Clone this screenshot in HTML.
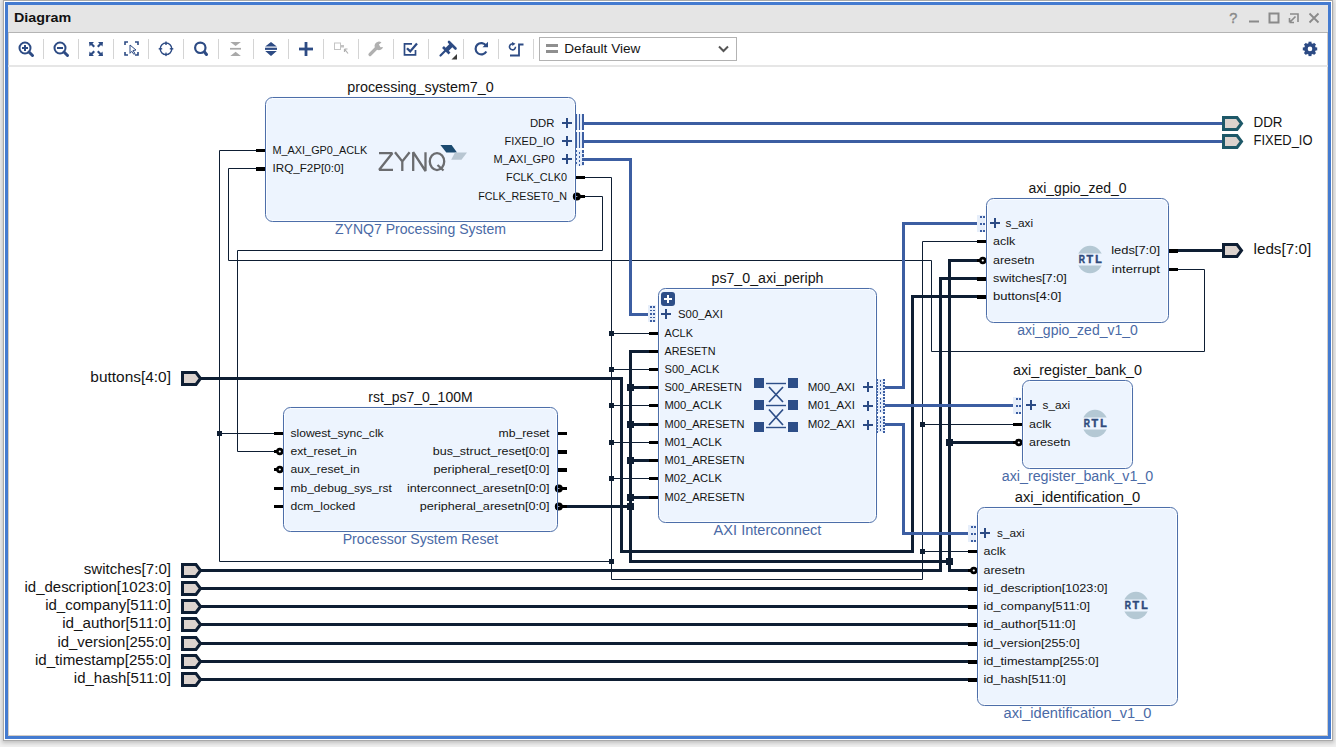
<!DOCTYPE html>
<html><head><meta charset="utf-8">
<style>
html,body{margin:0;padding:0;width:1336px;height:747px;overflow:hidden;background:#efefef;}
#white{position:absolute;left:4px;top:1px;width:1328px;height:739px;background:#fff;box-shadow:0 0 0 1px #a9a9a9, 0 1px 4px 2px rgba(0,0,0,0.2);}
#blue{position:absolute;left:5px;top:2px;width:1320px;height:731px;border:3px solid #447bd0;background:#fff;box-shadow:inset 1px -1px 0 #d2ccc6, inset -1px 0 0 #d2ccc6;}
#hdr{position:absolute;left:8px;top:5px;width:1320px;height:27px;background:#e5e5e5;border-bottom:1px solid #b4b4b4;}
#tbar{position:absolute;left:8px;top:65px;width:1320px;height:2px;background:#e6e6e6;}
svg{position:absolute;left:0;top:0;}
text{font-family:"Liberation Sans",sans-serif;}
</style></head><body>
<div id="white"></div>
<div id="blue"></div>
<div id="hdr"></div>
<div id="tbar"></div>
<svg width="1336" height="747" viewBox="0 0 1336 747">
<rect x="43" y="39" width="1" height="20" fill="#d4d4d4"/>
<rect x="78" y="39" width="1" height="20" fill="#d4d4d4"/>
<rect x="113" y="39" width="1" height="20" fill="#d4d4d4"/>
<rect x="148" y="39" width="1" height="20" fill="#d4d4d4"/>
<rect x="183" y="39" width="1" height="20" fill="#d4d4d4"/>
<rect x="218" y="39" width="1" height="20" fill="#d4d4d4"/>
<rect x="253" y="39" width="1" height="20" fill="#d4d4d4"/>
<rect x="288" y="39" width="1" height="20" fill="#d4d4d4"/>
<rect x="323" y="39" width="1" height="20" fill="#d4d4d4"/>
<rect x="358" y="39" width="1" height="20" fill="#d4d4d4"/>
<rect x="393" y="39" width="1" height="20" fill="#d4d4d4"/>
<rect x="428" y="39" width="1" height="20" fill="#d4d4d4"/>
<rect x="463" y="39" width="1" height="20" fill="#d4d4d4"/>
<rect x="498" y="39" width="1" height="20" fill="#d4d4d4"/>
<rect x="533" y="39" width="1" height="20" fill="#d4d4d4"/>
<circle cx="25" cy="48" r="5.5" fill="none" stroke="#2d4b84" stroke-width="2"/>
<path d="M29,52 L32.5,55.5" stroke="#2d4b84" stroke-width="3" stroke-linecap="round"/>
<rect x="22" y="47" width="6" height="2" fill="#2d4b84"/>
<rect x="24" y="45" width="2" height="6" fill="#2d4b84"/>
<circle cx="60" cy="48" r="5.5" fill="none" stroke="#2d4b84" stroke-width="2"/>
<path d="M64,52 L67.5,55.5" stroke="#2d4b84" stroke-width="3" stroke-linecap="round"/>
<rect x="57" y="47" width="6" height="2" fill="#2d4b84"/>
<path d="M89,42 h5 l-1.5,1.5 l2.5,2.5 l-1.5,1.5 l-2.5,-2.5 l-1.5,1.5 z M103,42 h-5 l1.5,1.5 l-2.5,2.5 l1.5,1.5 l2.5,-2.5 l1.5,1.5 z M89,56 h5 l-1.5,-1.5 l2.5,-2.5 l-1.5,-1.5 l-2.5,2.5 l-1.5,-1.5 z M103,56 h-5 l1.5,-1.5 l-2.5,-2.5 l1.5,-1.5 l2.5,2.5 l1.5,-1.5 z" fill="#2d4b84"/>
<path d="M125,45 v-3 h3 M135,42 h3 v3 M138,52 v3 h-3 M128,55 h-3 v-3" fill="none" stroke="#2d4b84" stroke-width="1.6"/>
<path d="M130,45 l6,5 l-3,0.5 l2,3 l-1.2,0.8 l-2,-3 l-1.8,2 z" fill="#fff" stroke="#2d4b84" stroke-width="1"/>
<circle cx="166" cy="48.8" r="5.8" fill="none" stroke="#2d4b84" stroke-width="1.4"/>
<rect x="165.3" y="41.5" width="1.4" height="3.5" fill="#2d4b84"/>
<rect x="165.3" y="52.6" width="1.4" height="3.5" fill="#2d4b84"/>
<rect x="158.7" y="48.1" width="3.5" height="1.4" fill="#2d4b84"/>
<rect x="169.8" y="48.1" width="3.5" height="1.4" fill="#2d4b84"/>
<circle cx="200.3" cy="47.8" r="5.2" fill="none" stroke="#2d4b84" stroke-width="2.2"/>
<path d="M204.5,52 L206.5,54.5" stroke="#2d4b84" stroke-width="3" stroke-linecap="round"/>
<path d="M230.3,42 h10.6 l-5.3,4.1 z M230.3,56 h10.6 l-5.3,-4.3 z" fill="#a9a9a9"/>
<rect x="230" y="47.9" width="11" height="1.7" fill="#a9a9a9"/>
<path d="M265.2,46.6 l5.8,-4.7 l5.8,4.7 z M265.2,51 l5.8,5 l5.8,-5 z" fill="#2d4b84"/>
<rect x="265" y="47.7" width="12" height="2.2" fill="#2d4b84"/>
<rect x="299" y="47.6" width="14" height="2.8" fill="#2d4b84"/>
<rect x="304.6" y="42" width="2.8" height="14" fill="#2d4b84"/>
<rect x="334.5" y="43" width="6" height="6.5" fill="none" stroke="#c4c4c4" stroke-width="1"/>
<rect x="341" y="45" width="3" height="2.5" fill="#c4c4c4"/>
<path d="M344.5,49 l3.5,4.5 M344.5,49 v3 M344.5,49 h3" stroke="#b0b0b0" stroke-width="1.2" fill="none"/>
<path d="M370,54.5 l7,-7" stroke="#b0b0b0" stroke-width="3.2" stroke-linecap="round"/>
<path d="M381.5,42.5 a4.3,4.3 0 1 0 1.5,4.5 l-2.5,0.2 l-1.6,-2.8 z" fill="#b0b0b0"/>
<path d="M415.5,50 v4.8 h-11 v-11 h7.5" fill="none" stroke="#2d4b84" stroke-width="1.7"/>
<path d="M407,48.2 l3.2,3.2 l6.8,-7.8" fill="none" stroke="#2d4b84" stroke-width="2.3"/>
<path d="M440.5,55.5 L446,50" stroke="#2d4b84" stroke-width="2.2" stroke-linecap="round"/>
<path d="M443,47 L449.5,53.5" stroke="#2d4b84" stroke-width="2.6"/>
<path d="M446,50.5 L451.5,45" stroke="#2d4b84" stroke-width="4.5"/>
<path d="M449,42 L455.5,48.5" stroke="#2d4b84" stroke-width="2.6" stroke-linecap="round"/>
<path d="M451.5,59.5 h5.5 v-5.5 z" fill="#3a3a3a"/>
<path d="M486,45.5 A5.7,5.7 0 1 0 486.3,51.5" fill="none" stroke="#2d4b84" stroke-width="2.2"/>
<path d="M482.5,47.3 h5.5 v-5.5 z" fill="#2d4b84"/>
<path d="M510,55.5 h9 v-11 h4.5" fill="none" stroke="#2d4b84" stroke-width="1.8"/>
<path d="M515.5,46.8 A3,3 0 1 1 513.5,44" fill="none" stroke="#2d4b84" stroke-width="1.6"/>
<path d="M512,42 l3.5,1.8 l-3.2,2.2 z" fill="#2d4b84"/>
<rect x="539.5" y="37.5" width="197" height="23" fill="#fff" stroke="#b3b3b3" stroke-width="1"/>
<rect x="546" y="44" width="12" height="3" fill="#8f8f8f"/>
<rect x="546" y="50" width="12" height="3" fill="#8f8f8f"/>
<text x="564.30" y="53.00" font-size="12.72" textLength="76.12" lengthAdjust="spacingAndGlyphs" fill="#141414">Default View</text>
<path d="M719,46.5 l4.5,4.5 l4.5,-4.5" fill="none" stroke="#555" stroke-width="2"/>
<g transform="translate(1310,48.9)"><circle r="4.1" fill="none" stroke="#2d4b84" stroke-width="3.6"/><rect x="-1.5" y="-7.2" width="3" height="3.5" fill="#2d4b84" transform="rotate(0)"/><rect x="-1.5" y="-7.2" width="3" height="3.5" fill="#2d4b84" transform="rotate(45)"/><rect x="-1.5" y="-7.2" width="3" height="3.5" fill="#2d4b84" transform="rotate(90)"/><rect x="-1.5" y="-7.2" width="3" height="3.5" fill="#2d4b84" transform="rotate(135)"/><rect x="-1.5" y="-7.2" width="3" height="3.5" fill="#2d4b84" transform="rotate(180)"/><rect x="-1.5" y="-7.2" width="3" height="3.5" fill="#2d4b84" transform="rotate(225)"/><rect x="-1.5" y="-7.2" width="3" height="3.5" fill="#2d4b84" transform="rotate(270)"/><rect x="-1.5" y="-7.2" width="3" height="3.5" fill="#2d4b84" transform="rotate(315)"/></g>
<text x="14.00" y="22.00" font-size="12.72" textLength="57.28" lengthAdjust="spacingAndGlyphs" fill="#111" font-weight="bold">Diagram</text>
<text x="1229.3" y="23" font-size="14.5" fill="#8a8a8a" stroke="#8a8a8a" stroke-width="0.4">?</text>
<rect x="1249" y="20.5" width="10" height="2" fill="#8a8a8a"/>
<rect x="1269.5" y="13.5" width="9" height="9" fill="none" stroke="#8a8a8a" stroke-width="2"/>
<path d="M1290,14 h8 v8 M1289.5,22.5 l6,-6 M1289.5,22.5 v-4.5 M1289.5,22.5 h4.5" fill="none" stroke="#8a8a8a" stroke-width="1.6"/>
<path d="M1309.5,13.5 l9,9 M1318.5,13.5 l-9,9" stroke="#8a8a8a" stroke-width="1.8"/>
<polyline points="584.5,177.5 611.5,177.5 611.5,579.5 922.5,579.5 922.5,241.5 976.5,241.5" fill="none" stroke="#0e1e33" stroke-width="1" stroke-linejoin="miter" stroke-linecap="square"/>
<polyline points="256.5,150.5 219.5,150.5 219.5,561.5 611.5,561.5" fill="none" stroke="#0e1e33" stroke-width="1" stroke-linejoin="miter" stroke-linecap="square"/>
<polyline points="219.5,433.5 274.5,433.5" fill="none" stroke="#0e1e33" stroke-width="1" stroke-linejoin="miter" stroke-linecap="square"/>
<polyline points="611.5,333.5 649.5,333.5" fill="none" stroke="#0e1e33" stroke-width="1" stroke-linejoin="miter" stroke-linecap="square"/>
<polyline points="611.5,369.5 649.5,369.5" fill="none" stroke="#0e1e33" stroke-width="1" stroke-linejoin="miter" stroke-linecap="square"/>
<polyline points="611.5,405.5 649.5,405.5" fill="none" stroke="#0e1e33" stroke-width="1" stroke-linejoin="miter" stroke-linecap="square"/>
<polyline points="611.5,442.5 649.5,442.5" fill="none" stroke="#0e1e33" stroke-width="1" stroke-linejoin="miter" stroke-linecap="square"/>
<polyline points="611.5,478.5 649.5,478.5" fill="none" stroke="#0e1e33" stroke-width="1" stroke-linejoin="miter" stroke-linecap="square"/>
<polyline points="922.5,424.5 1013.5,424.5" fill="none" stroke="#0e1e33" stroke-width="1" stroke-linejoin="miter" stroke-linecap="square"/>
<polyline points="922.5,551.5 968.5,551.5" fill="none" stroke="#0e1e33" stroke-width="1" stroke-linejoin="miter" stroke-linecap="square"/>
<polyline points="584.5,196.5 602.5,196.5 602.5,250.5 237.5,250.5 237.5,451.5 274.5,451.5" fill="none" stroke="#0e1e33" stroke-width="1" stroke-linejoin="miter" stroke-linecap="square"/>
<polyline points="256.5,168.5 228.5,168.5 228.5,260.5 931.5,260.5 931.5,351.5 1204.5,351.5 1204.5,269.5 1177.5,269.5" fill="none" stroke="#0e1e33" stroke-width="1" stroke-linejoin="miter" stroke-linecap="square"/>
<polyline points="566.5,506.5 630.5,506.5" fill="none" stroke="#0e1e33" stroke-width="3" stroke-linejoin="miter" stroke-linecap="square"/>
<polyline points="649.5,351.5 630.5,351.5 630.5,561.5 949.5,561.5" fill="none" stroke="#0e1e33" stroke-width="3" stroke-linejoin="miter" stroke-linecap="square"/>
<polyline points="630.5,387.5 649.5,387.5" fill="none" stroke="#0e1e33" stroke-width="3" stroke-linejoin="miter" stroke-linecap="square"/>
<polyline points="630.5,424.5 649.5,424.5" fill="none" stroke="#0e1e33" stroke-width="3" stroke-linejoin="miter" stroke-linecap="square"/>
<polyline points="630.5,460.5 649.5,460.5" fill="none" stroke="#0e1e33" stroke-width="3" stroke-linejoin="miter" stroke-linecap="square"/>
<polyline points="630.5,497.5 649.5,497.5" fill="none" stroke="#0e1e33" stroke-width="3" stroke-linejoin="miter" stroke-linecap="square"/>
<polyline points="977.5,260.5 949.5,260.5 949.5,570.5 968.5,570.5" fill="none" stroke="#0e1e33" stroke-width="3" stroke-linejoin="miter" stroke-linecap="square"/>
<polyline points="949.5,442.5 1013.5,442.5" fill="none" stroke="#0e1e33" stroke-width="3" stroke-linejoin="miter" stroke-linecap="square"/>
<polyline points="202.5,378.5 621.5,378.5 621.5,551.5 912.5,551.5 912.5,296.5 977.5,296.5" fill="none" stroke="#0e1e33" stroke-width="3" stroke-linejoin="miter" stroke-linecap="square"/>
<polyline points="202.5,570.5 940.5,570.5 940.5,278.5 977.5,278.5" fill="none" stroke="#0e1e33" stroke-width="3" stroke-linejoin="miter" stroke-linecap="square"/>
<polyline points="202.5,588.5 968.5,588.5" fill="none" stroke="#0e1e33" stroke-width="3" stroke-linejoin="miter" stroke-linecap="square"/>
<polyline points="202.5,606.5 968.5,606.5" fill="none" stroke="#0e1e33" stroke-width="3" stroke-linejoin="miter" stroke-linecap="square"/>
<polyline points="202.5,624.5 968.5,624.5" fill="none" stroke="#0e1e33" stroke-width="3" stroke-linejoin="miter" stroke-linecap="square"/>
<polyline points="202.5,643.5 968.5,643.5" fill="none" stroke="#0e1e33" stroke-width="3" stroke-linejoin="miter" stroke-linecap="square"/>
<polyline points="202.5,661.5 968.5,661.5" fill="none" stroke="#0e1e33" stroke-width="3" stroke-linejoin="miter" stroke-linecap="square"/>
<polyline points="202.5,679.5 968.5,679.5" fill="none" stroke="#0e1e33" stroke-width="3" stroke-linejoin="miter" stroke-linecap="square"/>
<polyline points="1177.5,250.5 1222.5,250.5" fill="none" stroke="#0e1e33" stroke-width="3" stroke-linejoin="miter" stroke-linecap="square"/>
<polyline points="585.5,123.5 1222.5,123.5" fill="none" stroke="#3c5ea2" stroke-width="3" stroke-linejoin="miter" stroke-linecap="square"/>
<polyline points="585.5,141.5 1222.5,141.5" fill="none" stroke="#3c5ea2" stroke-width="3" stroke-linejoin="miter" stroke-linecap="square"/>
<polyline points="585.5,159.5 630.5,159.5 630.5,314.5 648.5,314.5" fill="none" stroke="#3c5ea2" stroke-width="3" stroke-linejoin="miter" stroke-linecap="square"/>
<polyline points="886.5,387.5 903.5,387.5 903.5,223.5 976.5,223.5" fill="none" stroke="#3c5ea2" stroke-width="3" stroke-linejoin="miter" stroke-linecap="square"/>
<polyline points="886.5,405.5 1013.5,405.5" fill="none" stroke="#3c5ea2" stroke-width="3" stroke-linejoin="miter" stroke-linecap="square"/>
<polyline points="886.5,424.5 903.5,424.5 903.5,533.5 967.5,533.5" fill="none" stroke="#3c5ea2" stroke-width="3" stroke-linejoin="miter" stroke-linecap="square"/>
<rect x="217" y="431" width="5" height="5" fill="#0e1e33"/>
<rect x="609" y="331" width="5" height="5" fill="#0e1e33"/>
<rect x="609" y="367" width="5" height="5" fill="#0e1e33"/>
<rect x="609" y="403" width="5" height="5" fill="#0e1e33"/>
<rect x="609" y="440" width="5" height="5" fill="#0e1e33"/>
<rect x="609" y="476" width="5" height="5" fill="#0e1e33"/>
<rect x="609" y="559" width="5" height="5" fill="#0e1e33"/>
<rect x="920" y="422" width="5" height="5" fill="#0e1e33"/>
<rect x="920" y="549" width="5" height="5" fill="#0e1e33"/>
<rect x="627" y="384" width="7" height="7" fill="#0e1e33"/>
<rect x="627" y="421" width="7" height="7" fill="#0e1e33"/>
<rect x="627" y="457" width="7" height="7" fill="#0e1e33"/>
<rect x="627" y="494" width="7" height="7" fill="#0e1e33"/>
<rect x="627" y="503" width="7" height="7" fill="#0e1e33"/>
<rect x="946" y="558" width="7" height="7" fill="#0e1e33"/>
<rect x="946" y="439" width="7" height="7" fill="#0e1e33"/>
<rect x="265.5" y="97.5" width="310" height="124" rx="7" ry="7" fill="#edf4fe" stroke="#fbfdff" stroke-width="3"/>
<text x="347.23" y="91.80" font-size="13.78" textLength="146.53" lengthAdjust="spacingAndGlyphs" fill="#141414">processing_system7_0</text>
<text x="334.92" y="234.00" font-size="13.78" textLength="171.16" lengthAdjust="spacingAndGlyphs" fill="#4a6aa6">ZYNQ7 Processing System</text>
<rect x="256" y="149" width="9" height="3" fill="#000"/>
<text x="272.50" y="154.00" font-size="11.66" textLength="94.84" lengthAdjust="spacingAndGlyphs" fill="#141414">M_AXI_GP0_ACLK</text>
<rect x="256" y="167" width="9" height="4" fill="#000"/>
<text x="272.50" y="172.00" font-size="11.66" textLength="71.31" lengthAdjust="spacingAndGlyphs" fill="#141414">IRQ_F2P[0:0]</text>
<rect x="576" y="114" width="8" height="16" fill="#e6eefa"/>
<rect x="576" y="114" width="1" height="16" fill="#3c5ea2"/>
<rect x="579" y="114" width="1" height="16" fill="#3c5ea2"/>
<rect x="582" y="114" width="2" height="16" fill="#3c5ea2"/>
<rect x="562" y="122" width="10" height="2" fill="#2c4b85"/>
<rect x="566" y="118" width="2" height="10" fill="#2c4b85"/>
<text x="529.92" y="127.00" font-size="11.66" textLength="24.58" lengthAdjust="spacingAndGlyphs" fill="#141414">DDR</text>
<rect x="576" y="132" width="8" height="16" fill="#e6eefa"/>
<rect x="576" y="132" width="1" height="16" fill="#3c5ea2"/>
<rect x="579" y="132" width="1" height="16" fill="#3c5ea2"/>
<rect x="582" y="132" width="2" height="16" fill="#3c5ea2"/>
<rect x="562" y="140" width="10" height="2" fill="#2c4b85"/>
<rect x="566" y="136" width="2" height="10" fill="#2c4b85"/>
<text x="504.56" y="145.00" font-size="11.66" textLength="49.94" lengthAdjust="spacingAndGlyphs" fill="#141414">FIXED_IO</text>
<rect x="576" y="150" width="8" height="16" fill="#e6eefa"/>
<rect x="576" y="150" width="1" height="2" fill="#3c5ea2"/>
<rect x="582" y="150" width="2" height="2" fill="#3c5ea2"/>
<rect x="576" y="154" width="1" height="2" fill="#3c5ea2"/>
<rect x="582" y="154" width="2" height="2" fill="#3c5ea2"/>
<rect x="576" y="158" width="1" height="2" fill="#3c5ea2"/>
<rect x="582" y="158" width="2" height="2" fill="#3c5ea2"/>
<rect x="576" y="162" width="1" height="2" fill="#3c5ea2"/>
<rect x="582" y="162" width="2" height="2" fill="#3c5ea2"/>
<rect x="579" y="152" width="1" height="2" fill="#3c5ea2"/>
<rect x="582" y="152" width="2" height="1" fill="#3c5ea2"/>
<rect x="579" y="156" width="1" height="2" fill="#3c5ea2"/>
<rect x="582" y="156" width="2" height="1" fill="#3c5ea2"/>
<rect x="579" y="160" width="1" height="2" fill="#3c5ea2"/>
<rect x="582" y="160" width="2" height="1" fill="#3c5ea2"/>
<rect x="579" y="164" width="1" height="2" fill="#3c5ea2"/>
<rect x="582" y="164" width="2" height="1" fill="#3c5ea2"/>
<rect x="562" y="158" width="10" height="2" fill="#2c4b85"/>
<rect x="566" y="154" width="2" height="10" fill="#2c4b85"/>
<text x="493.53" y="163.00" font-size="11.66" textLength="60.97" lengthAdjust="spacingAndGlyphs" fill="#141414">M_AXI_GP0</text>
<rect x="576" y="176" width="9" height="3" fill="#000"/>
<text x="506.11" y="181.00" font-size="11.66" textLength="60.89" lengthAdjust="spacingAndGlyphs" fill="#141414">FCLK_CLK0</text>
<rect x="579" y="195" width="6" height="3" fill="#000"/>
<circle cx="576.8" cy="196.5" r="2.3" fill="#fff" stroke="#000" stroke-width="3.4"/>
<text x="478.16" y="200.00" font-size="11.66" textLength="88.84" lengthAdjust="spacingAndGlyphs" fill="#141414">FCLK_RESET0_N</text>
<path d="M379,153.2 H392.3 L379.2,169.8 H393" fill="none" stroke="#6b6c6f" stroke-width="2.3" stroke-linejoin="bevel"/>
<path d="M395,152.2 L402.3,161.5 L409.6,152.2 M402.3,161.5 V171" fill="none" stroke="#6b6c6f" stroke-width="2.3"/>
<path d="M413.2,171 V152.2 L425.5,171 V152.2" fill="none" stroke="#6b6c6f" stroke-width="2.3" stroke-linejoin="bevel"/>
<ellipse cx="437" cy="161.6" rx="7.2" ry="8.5" fill="none" stroke="#6b6c6f" stroke-width="2.3"/>
<path d="M437.5,165 L443.5,170.5" fill="none" stroke="#6b6c6f" stroke-width="2.3"/>
<polygon points="440.4,145 451.6,145 457,152.5 446.3,152.5" fill="#1b4a70"/>
<polygon points="455,152.5 467,152.5 461.5,159.7 451.2,159.7" fill="#b8c6d2"/>
<rect x="283.5" y="407.5" width="274" height="124" rx="7" ry="7" fill="#edf4fe" stroke="#fbfdff" stroke-width="3"/>
<text x="368.37" y="401.80" font-size="13.78" textLength="104.27" lengthAdjust="spacingAndGlyphs" fill="#141414">rst_ps7_0_100M</text>
<text x="342.70" y="544.00" font-size="13.78" textLength="155.61" lengthAdjust="spacingAndGlyphs" fill="#4a6aa6">Processor System Reset</text>
<rect x="274" y="432" width="9" height="3" fill="#000"/>
<text x="290.50" y="437.00" font-size="11.66" textLength="93.09" lengthAdjust="spacingAndGlyphs" fill="#141414">slowest_sync_clk</text>
<rect x="274" y="450" width="5" height="3" fill="#000"/>
<circle cx="279.8" cy="451.5" r="2.4" fill="#fff" stroke="#000" stroke-width="2.6"/>
<text x="290.50" y="455.00" font-size="11.66" textLength="66.30" lengthAdjust="spacingAndGlyphs" fill="#141414">ext_reset_in</text>
<rect x="274" y="468" width="5" height="3" fill="#000"/>
<circle cx="279.8" cy="469.5" r="2.4" fill="#fff" stroke="#000" stroke-width="2.6"/>
<text x="290.50" y="473.00" font-size="11.66" textLength="69.11" lengthAdjust="spacingAndGlyphs" fill="#141414">aux_reset_in</text>
<rect x="274" y="487" width="9" height="3" fill="#000"/>
<text x="290.50" y="492.00" font-size="11.66" textLength="101.44" lengthAdjust="spacingAndGlyphs" fill="#141414">mb_debug_sys_rst</text>
<rect x="274" y="505" width="9" height="3" fill="#000"/>
<text x="290.50" y="510.00" font-size="11.66" textLength="64.83" lengthAdjust="spacingAndGlyphs" fill="#141414">dcm_locked</text>
<rect x="558" y="432" width="9" height="3" fill="#000"/>
<text x="498.44" y="437.00" font-size="11.66" textLength="51.06" lengthAdjust="spacingAndGlyphs" fill="#141414">mb_reset</text>
<rect x="558" y="450" width="9" height="4" fill="#000"/>
<text x="432.77" y="455.00" font-size="11.66" textLength="116.73" lengthAdjust="spacingAndGlyphs" fill="#141414">bus_struct_reset[0:0]</text>
<rect x="558" y="468" width="9" height="4" fill="#000"/>
<text x="433.48" y="473.00" font-size="11.66" textLength="116.02" lengthAdjust="spacingAndGlyphs" fill="#141414">peripheral_reset[0:0]</text>
<rect x="561" y="487" width="6" height="3" fill="#000"/>
<circle cx="558.8" cy="488.5" r="2.3" fill="#fff" stroke="#000" stroke-width="3.4"/>
<text x="406.91" y="492.00" font-size="11.66" textLength="142.59" lengthAdjust="spacingAndGlyphs" fill="#141414">interconnect_aresetn[0:0]</text>
<rect x="561" y="505" width="6" height="3" fill="#000"/>
<circle cx="558.8" cy="506.5" r="2.3" fill="#fff" stroke="#000" stroke-width="3.4"/>
<text x="419.78" y="510.00" font-size="11.66" textLength="129.72" lengthAdjust="spacingAndGlyphs" fill="#141414">peripheral_aresetn[0:0]</text>
<rect x="658.5" y="288.5" width="218" height="234" rx="7" ry="7" fill="#edf4fe" stroke="#fbfdff" stroke-width="3"/>
<text x="711.50" y="282.80" font-size="13.78" textLength="112.00" lengthAdjust="spacingAndGlyphs" fill="#141414">ps7_0_axi_periph</text>
<text x="713.62" y="535.00" font-size="13.78" textLength="107.77" lengthAdjust="spacingAndGlyphs" fill="#4a6aa6">AXI Interconnect</text>
<rect x="661" y="292" width="14" height="14" rx="3" fill="#2d4e88"/>
<rect x="664" y="298" width="8" height="2" fill="#fff"/>
<rect x="667" y="295" width="2" height="8" fill="#fff"/>
<rect x="648" y="305" width="8" height="17" fill="#e6eefa"/>
<rect x="650" y="306" width="2" height="2" fill="#3c5ea2"/>
<rect x="653" y="306" width="2" height="2" fill="#3c5ea2"/>
<rect x="650" y="310" width="2" height="1" fill="#3c5ea2"/>
<rect x="653" y="310" width="2" height="1" fill="#3c5ea2"/>
<rect x="650" y="313" width="2" height="2" fill="#3c5ea2"/>
<rect x="653" y="313" width="2" height="2" fill="#3c5ea2"/>
<rect x="650" y="317" width="2" height="1" fill="#3c5ea2"/>
<rect x="653" y="317" width="2" height="1" fill="#3c5ea2"/>
<rect x="650" y="320" width="2" height="2" fill="#3c5ea2"/>
<rect x="653" y="320" width="2" height="2" fill="#3c5ea2"/>
<rect x="661" y="313" width="10" height="2" fill="#2c4b85"/>
<rect x="665" y="309" width="2" height="10" fill="#2c4b85"/>
<text x="678.00" y="318.00" font-size="11.66" textLength="44.80" lengthAdjust="spacingAndGlyphs" fill="#141414">S00_AXI</text>
<rect x="649" y="332" width="9" height="3" fill="#000"/>
<text x="664.50" y="337.00" font-size="11.66" textLength="28.38" lengthAdjust="spacingAndGlyphs" fill="#141414">ACLK</text>
<rect x="649" y="350" width="9" height="3" fill="#000"/>
<text x="664.50" y="355.00" font-size="11.66" textLength="51.02" lengthAdjust="spacingAndGlyphs" fill="#141414">ARESETN</text>
<rect x="649" y="368" width="9" height="3" fill="#000"/>
<text x="664.50" y="373.00" font-size="11.66" textLength="54.86" lengthAdjust="spacingAndGlyphs" fill="#141414">S00_ACLK</text>
<rect x="649" y="386" width="9" height="3" fill="#000"/>
<text x="664.50" y="391.00" font-size="11.66" textLength="77.50" lengthAdjust="spacingAndGlyphs" fill="#141414">S00_ARESETN</text>
<rect x="649" y="404" width="9" height="3" fill="#000"/>
<text x="664.50" y="409.00" font-size="11.66" textLength="57.36" lengthAdjust="spacingAndGlyphs" fill="#141414">M00_ACLK</text>
<rect x="649" y="423" width="9" height="3" fill="#000"/>
<text x="664.50" y="428.00" font-size="11.66" textLength="80.00" lengthAdjust="spacingAndGlyphs" fill="#141414">M00_ARESETN</text>
<rect x="649" y="441" width="9" height="3" fill="#000"/>
<text x="664.50" y="446.00" font-size="11.66" textLength="57.36" lengthAdjust="spacingAndGlyphs" fill="#141414">M01_ACLK</text>
<rect x="649" y="459" width="9" height="3" fill="#000"/>
<text x="664.50" y="464.00" font-size="11.66" textLength="80.00" lengthAdjust="spacingAndGlyphs" fill="#141414">M01_ARESETN</text>
<rect x="649" y="477" width="9" height="3" fill="#000"/>
<text x="664.50" y="482.00" font-size="11.66" textLength="57.36" lengthAdjust="spacingAndGlyphs" fill="#141414">M02_ACLK</text>
<rect x="649" y="496" width="9" height="3" fill="#000"/>
<text x="664.50" y="501.00" font-size="11.66" textLength="80.00" lengthAdjust="spacingAndGlyphs" fill="#141414">M02_ARESETN</text>
<rect x="877" y="379" width="8" height="16" fill="#e6eefa"/>
<rect x="877" y="379" width="1" height="2" fill="#3c5ea2"/>
<rect x="883" y="379" width="2" height="2" fill="#3c5ea2"/>
<rect x="877" y="382" width="1" height="2" fill="#3c5ea2"/>
<rect x="883" y="382" width="2" height="2" fill="#3c5ea2"/>
<rect x="877" y="385" width="1" height="2" fill="#3c5ea2"/>
<rect x="883" y="385" width="2" height="2" fill="#3c5ea2"/>
<rect x="877" y="388" width="1" height="2" fill="#3c5ea2"/>
<rect x="883" y="388" width="2" height="2" fill="#3c5ea2"/>
<rect x="877" y="391" width="1" height="2" fill="#3c5ea2"/>
<rect x="883" y="391" width="2" height="2" fill="#3c5ea2"/>
<rect x="877" y="394" width="1" height="2" fill="#3c5ea2"/>
<rect x="883" y="394" width="2" height="2" fill="#3c5ea2"/>
<rect x="880" y="380" width="1" height="2" fill="#3c5ea2"/>
<rect x="880" y="384" width="1" height="2" fill="#3c5ea2"/>
<rect x="880" y="388" width="1" height="2" fill="#3c5ea2"/>
<rect x="880" y="392" width="1" height="2" fill="#3c5ea2"/>
<rect x="863" y="386" width="10" height="2" fill="#2c4b85"/>
<rect x="867" y="382" width="2" height="10" fill="#2c4b85"/>
<text x="807.70" y="391.00" font-size="11.66" textLength="47.30" lengthAdjust="spacingAndGlyphs" fill="#141414">M00_AXI</text>
<rect x="877" y="397" width="8" height="16" fill="#e6eefa"/>
<rect x="877" y="397" width="1" height="2" fill="#3c5ea2"/>
<rect x="883" y="397" width="2" height="2" fill="#3c5ea2"/>
<rect x="877" y="400" width="1" height="2" fill="#3c5ea2"/>
<rect x="883" y="400" width="2" height="2" fill="#3c5ea2"/>
<rect x="877" y="403" width="1" height="2" fill="#3c5ea2"/>
<rect x="883" y="403" width="2" height="2" fill="#3c5ea2"/>
<rect x="877" y="406" width="1" height="2" fill="#3c5ea2"/>
<rect x="883" y="406" width="2" height="2" fill="#3c5ea2"/>
<rect x="877" y="409" width="1" height="2" fill="#3c5ea2"/>
<rect x="883" y="409" width="2" height="2" fill="#3c5ea2"/>
<rect x="877" y="412" width="1" height="2" fill="#3c5ea2"/>
<rect x="883" y="412" width="2" height="2" fill="#3c5ea2"/>
<rect x="880" y="398" width="1" height="2" fill="#3c5ea2"/>
<rect x="880" y="402" width="1" height="2" fill="#3c5ea2"/>
<rect x="880" y="406" width="1" height="2" fill="#3c5ea2"/>
<rect x="880" y="410" width="1" height="2" fill="#3c5ea2"/>
<rect x="863" y="405" width="10" height="2" fill="#2c4b85"/>
<rect x="867" y="401" width="2" height="10" fill="#2c4b85"/>
<text x="807.70" y="409.00" font-size="11.66" textLength="47.30" lengthAdjust="spacingAndGlyphs" fill="#141414">M01_AXI</text>
<rect x="877" y="416" width="8" height="16" fill="#e6eefa"/>
<rect x="877" y="416" width="1" height="2" fill="#3c5ea2"/>
<rect x="883" y="416" width="2" height="2" fill="#3c5ea2"/>
<rect x="877" y="419" width="1" height="2" fill="#3c5ea2"/>
<rect x="883" y="419" width="2" height="2" fill="#3c5ea2"/>
<rect x="877" y="422" width="1" height="2" fill="#3c5ea2"/>
<rect x="883" y="422" width="2" height="2" fill="#3c5ea2"/>
<rect x="877" y="425" width="1" height="2" fill="#3c5ea2"/>
<rect x="883" y="425" width="2" height="2" fill="#3c5ea2"/>
<rect x="877" y="428" width="1" height="2" fill="#3c5ea2"/>
<rect x="883" y="428" width="2" height="2" fill="#3c5ea2"/>
<rect x="877" y="431" width="1" height="2" fill="#3c5ea2"/>
<rect x="883" y="431" width="2" height="2" fill="#3c5ea2"/>
<rect x="880" y="417" width="1" height="2" fill="#3c5ea2"/>
<rect x="880" y="421" width="1" height="2" fill="#3c5ea2"/>
<rect x="880" y="425" width="1" height="2" fill="#3c5ea2"/>
<rect x="880" y="429" width="1" height="2" fill="#3c5ea2"/>
<rect x="863" y="424" width="10" height="2" fill="#2c4b85"/>
<rect x="867" y="420" width="2" height="10" fill="#2c4b85"/>
<text x="807.70" y="428.00" font-size="11.66" textLength="47.30" lengthAdjust="spacingAndGlyphs" fill="#141414">M02_AXI</text>
<rect x="754" y="378" width="10" height="10" fill="#2d4e88"/>
<rect x="788" y="378" width="10" height="10" fill="#2d4e88"/>
<rect x="754" y="400" width="10" height="10" fill="#2d4e88"/>
<rect x="788" y="400" width="10" height="10" fill="#2d4e88"/>
<rect x="754" y="422" width="10" height="10" fill="#2d4e88"/>
<rect x="788" y="422" width="10" height="10" fill="#2d4e88"/>
<rect x="766" y="382.8" width="20" height="1.4" fill="#2d4e88"/>
<rect x="766" y="404.8" width="20" height="1.4" fill="#2d4e88"/>
<rect x="766" y="426.8" width="20" height="1.4" fill="#2d4e88"/>
<path d="M769,387 Q775,393.5 783,402 M783,387 Q777,393.5 769,402" stroke="#2d4e88" stroke-width="1.7" fill="none"/>
<path d="M769,409.5 Q775,416.25 783,425 M783,409.5 Q777,416.25 769,425" stroke="#2d4e88" stroke-width="1.7" fill="none"/>
<rect x="986.5" y="198.5" width="182" height="124" rx="7" ry="7" fill="#edf4fe" stroke="#fbfdff" stroke-width="3"/>
<text x="1028.41" y="192.80" font-size="13.78" textLength="98.17" lengthAdjust="spacingAndGlyphs" fill="#141414">axi_gpio_zed_0</text>
<text x="1017.19" y="335.00" font-size="13.78" textLength="120.62" lengthAdjust="spacingAndGlyphs" fill="#4a6aa6">axi_gpio_zed_v1_0</text>
<rect x="977" y="215" width="8" height="17" fill="#e6eefa"/>
<rect x="980" y="216" width="2" height="2" fill="#3c5ea2"/>
<rect x="983" y="216" width="2" height="2" fill="#3c5ea2"/>
<rect x="980" y="223" width="2" height="2" fill="#3c5ea2"/>
<rect x="983" y="223" width="2" height="2" fill="#3c5ea2"/>
<rect x="980" y="230" width="2" height="2" fill="#3c5ea2"/>
<rect x="983" y="230" width="2" height="2" fill="#3c5ea2"/>
<rect x="990" y="222" width="10" height="2" fill="#2c4b85"/>
<rect x="994" y="218" width="2" height="10" fill="#2c4b85"/>
<text x="1005.50" y="227.00" font-size="11.66" textLength="27.55" lengthAdjust="spacingAndGlyphs" fill="#141414">s_axi</text>
<rect x="977" y="240" width="9" height="3" fill="#000"/>
<text x="993.00" y="245.00" font-size="11.66" textLength="22.22" lengthAdjust="spacingAndGlyphs" fill="#141414">aclk</text>
<rect x="977" y="259" width="5" height="3" fill="#000"/>
<circle cx="982.8" cy="260.5" r="2.4" fill="#fff" stroke="#000" stroke-width="2.6"/>
<text x="993.00" y="264.00" font-size="11.66" textLength="41.56" lengthAdjust="spacingAndGlyphs" fill="#141414">aresetn</text>
<rect x="977" y="277" width="9" height="4" fill="#000"/>
<text x="993.00" y="282.00" font-size="11.66" textLength="73.92" lengthAdjust="spacingAndGlyphs" fill="#141414">switches[7:0]</text>
<rect x="977" y="295" width="9" height="4" fill="#000"/>
<text x="993.00" y="300.00" font-size="11.66" textLength="68.31" lengthAdjust="spacingAndGlyphs" fill="#141414">buttons[4:0]</text>
<rect x="1169" y="249" width="9" height="4" fill="#000"/>
<text x="1111.16" y="254.00" font-size="11.66" textLength="48.84" lengthAdjust="spacingAndGlyphs" fill="#141414">leds[7:0]</text>
<rect x="1169" y="268" width="9" height="3" fill="#000"/>
<text x="1111.78" y="273.00" font-size="11.66" textLength="48.22" lengthAdjust="spacingAndGlyphs" fill="#141414">interrupt</text>
<ellipse cx="1090" cy="259.5" rx="12.8" ry="13.7" fill="#b4c8d4"/>
<rect x="1077" y="253.5" width="26" height="12" fill="#edf4fe"/>
<text x="1078.8" y="263.3" font-size="11.3" font-weight="bold" fill="#2e4a7c" stroke="#2e4a7c" stroke-width="0.5" textLength="6.2" lengthAdjust="spacingAndGlyphs">R</text>
<text x="1086.4" y="263.3" font-size="11.3" font-weight="bold" fill="#2e4a7c" stroke="#2e4a7c" stroke-width="0.5" textLength="6.6" lengthAdjust="spacingAndGlyphs">T</text>
<text x="1095.2" y="263.3" font-size="11.3" font-weight="bold" fill="#2e4a7c" stroke="#2e4a7c" stroke-width="0.5" textLength="6.5" lengthAdjust="spacingAndGlyphs">L</text>
<rect x="1022.5" y="380.5" width="110" height="88" rx="7" ry="7" fill="#edf4fe" stroke="#fbfdff" stroke-width="3"/>
<text x="1012.93" y="374.80" font-size="13.78" textLength="129.14" lengthAdjust="spacingAndGlyphs" fill="#141414">axi_register_bank_0</text>
<text x="1001.70" y="481.00" font-size="13.78" textLength="151.59" lengthAdjust="spacingAndGlyphs" fill="#4a6aa6">axi_register_bank_v1_0</text>
<rect x="1013" y="397" width="8" height="17" fill="#e6eefa"/>
<rect x="1016" y="398" width="2" height="2" fill="#3c5ea2"/>
<rect x="1019" y="398" width="2" height="2" fill="#3c5ea2"/>
<rect x="1016" y="405" width="2" height="2" fill="#3c5ea2"/>
<rect x="1019" y="405" width="2" height="2" fill="#3c5ea2"/>
<rect x="1016" y="412" width="2" height="2" fill="#3c5ea2"/>
<rect x="1019" y="412" width="2" height="2" fill="#3c5ea2"/>
<rect x="1026" y="404" width="10" height="2" fill="#2c4b85"/>
<rect x="1030" y="400" width="2" height="10" fill="#2c4b85"/>
<text x="1042.50" y="409.00" font-size="11.66" textLength="27.55" lengthAdjust="spacingAndGlyphs" fill="#141414">s_axi</text>
<rect x="1013" y="423" width="9" height="3" fill="#000"/>
<text x="1029.00" y="428.00" font-size="11.66" textLength="22.22" lengthAdjust="spacingAndGlyphs" fill="#141414">aclk</text>
<rect x="1013" y="441" width="5" height="3" fill="#000"/>
<circle cx="1018.8" cy="442.5" r="2.4" fill="#fff" stroke="#000" stroke-width="2.6"/>
<text x="1029.00" y="446.00" font-size="11.66" textLength="41.56" lengthAdjust="spacingAndGlyphs" fill="#141414">aresetn</text>
<ellipse cx="1095" cy="423.5" rx="12.8" ry="13.7" fill="#b4c8d4"/>
<rect x="1082" y="417.5" width="26" height="12" fill="#edf4fe"/>
<text x="1083.8" y="427.3" font-size="11.3" font-weight="bold" fill="#2e4a7c" stroke="#2e4a7c" stroke-width="0.5" textLength="6.2" lengthAdjust="spacingAndGlyphs">R</text>
<text x="1091.4" y="427.3" font-size="11.3" font-weight="bold" fill="#2e4a7c" stroke="#2e4a7c" stroke-width="0.5" textLength="6.6" lengthAdjust="spacingAndGlyphs">T</text>
<text x="1100.2" y="427.3" font-size="11.3" font-weight="bold" fill="#2e4a7c" stroke="#2e4a7c" stroke-width="0.5" textLength="6.5" lengthAdjust="spacingAndGlyphs">L</text>
<rect x="977.5" y="507.5" width="200" height="198" rx="7" ry="7" fill="#edf4fe" stroke="#fbfdff" stroke-width="3"/>
<text x="1014.74" y="501.80" font-size="13.78" textLength="125.52" lengthAdjust="spacingAndGlyphs" fill="#141414">axi_identification_0</text>
<text x="1003.52" y="718.00" font-size="13.78" textLength="147.97" lengthAdjust="spacingAndGlyphs" fill="#4a6aa6">axi_identification_v1_0</text>
<rect x="968" y="525" width="8" height="17" fill="#e6eefa"/>
<rect x="971" y="526" width="2" height="2" fill="#3c5ea2"/>
<rect x="974" y="526" width="2" height="2" fill="#3c5ea2"/>
<rect x="971" y="533" width="2" height="2" fill="#3c5ea2"/>
<rect x="974" y="533" width="2" height="2" fill="#3c5ea2"/>
<rect x="971" y="540" width="2" height="2" fill="#3c5ea2"/>
<rect x="974" y="540" width="2" height="2" fill="#3c5ea2"/>
<rect x="980" y="532" width="10" height="2" fill="#2c4b85"/>
<rect x="984" y="528" width="2" height="10" fill="#2c4b85"/>
<text x="997.00" y="537.00" font-size="11.66" textLength="27.55" lengthAdjust="spacingAndGlyphs" fill="#141414">s_axi</text>
<rect x="968" y="550" width="9" height="3" fill="#000"/>
<text x="983.50" y="555.00" font-size="11.66" textLength="22.22" lengthAdjust="spacingAndGlyphs" fill="#141414">aclk</text>
<rect x="968" y="569" width="5" height="3" fill="#000"/>
<circle cx="973.8" cy="570.5" r="2.4" fill="#fff" stroke="#000" stroke-width="2.6"/>
<text x="983.50" y="574.00" font-size="11.66" textLength="41.56" lengthAdjust="spacingAndGlyphs" fill="#141414">aresetn</text>
<rect x="968" y="587" width="9" height="4" fill="#000"/>
<text x="983.50" y="592.00" font-size="11.66" textLength="124.02" lengthAdjust="spacingAndGlyphs" fill="#141414">id_description[1023:0]</text>
<rect x="968" y="605" width="9" height="4" fill="#000"/>
<text x="983.50" y="610.00" font-size="11.66" textLength="106.55" lengthAdjust="spacingAndGlyphs" fill="#141414">id_company[511:0]</text>
<rect x="968" y="623" width="9" height="4" fill="#000"/>
<text x="983.50" y="628.00" font-size="11.66" textLength="92.08" lengthAdjust="spacingAndGlyphs" fill="#141414">id_author[511:0]</text>
<rect x="968" y="642" width="9" height="4" fill="#000"/>
<text x="983.50" y="647.00" font-size="11.66" textLength="96.14" lengthAdjust="spacingAndGlyphs" fill="#141414">id_version[255:0]</text>
<rect x="968" y="660" width="9" height="4" fill="#000"/>
<text x="983.50" y="665.00" font-size="11.66" textLength="115.19" lengthAdjust="spacingAndGlyphs" fill="#141414">id_timestamp[255:0]</text>
<rect x="968" y="678" width="9" height="4" fill="#000"/>
<text x="983.50" y="683.00" font-size="11.66" textLength="82.25" lengthAdjust="spacingAndGlyphs" fill="#141414">id_hash[511:0]</text>
<ellipse cx="1136" cy="605.5" rx="12.8" ry="13.7" fill="#b4c8d4"/>
<rect x="1123" y="599.5" width="26" height="12" fill="#edf4fe"/>
<text x="1124.8" y="609.3" font-size="11.3" font-weight="bold" fill="#2e4a7c" stroke="#2e4a7c" stroke-width="0.5" textLength="6.2" lengthAdjust="spacingAndGlyphs">R</text>
<text x="1132.4" y="609.3" font-size="11.3" font-weight="bold" fill="#2e4a7c" stroke="#2e4a7c" stroke-width="0.5" textLength="6.6" lengthAdjust="spacingAndGlyphs">T</text>
<text x="1141.2" y="609.3" font-size="11.3" font-weight="bold" fill="#2e4a7c" stroke="#2e4a7c" stroke-width="0.5" textLength="6.5" lengthAdjust="spacingAndGlyphs">L</text>
<rect x="265.5" y="97.5" width="310" height="124" rx="7" ry="7" fill="none" stroke="#4d6ea9" stroke-width="1"/>
<rect x="283.5" y="407.5" width="274" height="124" rx="7" ry="7" fill="none" stroke="#4d6ea9" stroke-width="1"/>
<rect x="658.5" y="288.5" width="218" height="234" rx="7" ry="7" fill="none" stroke="#4d6ea9" stroke-width="1"/>
<rect x="986.5" y="198.5" width="182" height="124" rx="7" ry="7" fill="none" stroke="#4d6ea9" stroke-width="1"/>
<rect x="1022.5" y="380.5" width="110" height="88" rx="7" ry="7" fill="none" stroke="#4d6ea9" stroke-width="1"/>
<rect x="977.5" y="507.5" width="200" height="198" rx="7" ry="7" fill="none" stroke="#4d6ea9" stroke-width="1"/>
<polygon points="1223.5,117.5 1237,117.5 1241.5,123.5 1237,129.5 1223.5,129.5" fill="#dcd3ce" stroke="#1d5868" stroke-width="3" stroke-linejoin="miter"/>
<text x="1253.50" y="126.80" font-size="13.78" textLength="29.06" lengthAdjust="spacingAndGlyphs" fill="#141414">DDR</text>
<polygon points="1223.5,135.5 1237,135.5 1241.5,141.5 1237,147.5 1223.5,147.5" fill="#dcd3ce" stroke="#1d5868" stroke-width="3" stroke-linejoin="miter"/>
<text x="1253.50" y="144.80" font-size="13.78" textLength="59.02" lengthAdjust="spacingAndGlyphs" fill="#141414">FIXED_IO</text>
<polygon points="1223.5,244.5 1237,244.5 1241.5,250.5 1237,256.5 1223.5,256.5" fill="#dcd3ce" stroke="#0e1e33" stroke-width="3" stroke-linejoin="miter"/>
<text x="1253.50" y="253.80" font-size="13.78" textLength="57.69" lengthAdjust="spacingAndGlyphs" fill="#141414">leds[7:0]</text>
<polygon points="182.5,372.5 196,372.5 200.5,378.5 196,384.5 182.5,384.5" fill="#dcd3ce" stroke="#0e1e33" stroke-width="3" stroke-linejoin="miter"/>
<text x="90.31" y="381.60" font-size="13.78" textLength="80.69" lengthAdjust="spacingAndGlyphs" fill="#141414">buttons[4:0]</text>
<polygon points="182.5,564.5 196,564.5 200.5,570.5 196,576.5 182.5,576.5" fill="#dcd3ce" stroke="#0e1e33" stroke-width="3" stroke-linejoin="miter"/>
<text x="83.70" y="573.60" font-size="13.78" textLength="87.30" lengthAdjust="spacingAndGlyphs" fill="#141414">switches[7:0]</text>
<polygon points="182.5,582.5 196,582.5 200.5,588.5 196,594.5 182.5,594.5" fill="#dcd3ce" stroke="#0e1e33" stroke-width="3" stroke-linejoin="miter"/>
<text x="24.53" y="591.60" font-size="13.78" textLength="146.47" lengthAdjust="spacingAndGlyphs" fill="#141414">id_description[1023:0]</text>
<polygon points="182.5,600.5 196,600.5 200.5,606.5 196,612.5 182.5,612.5" fill="#dcd3ce" stroke="#0e1e33" stroke-width="3" stroke-linejoin="miter"/>
<text x="45.16" y="609.60" font-size="13.78" textLength="125.84" lengthAdjust="spacingAndGlyphs" fill="#141414">id_company[511:0]</text>
<polygon points="182.5,618.5 196,618.5 200.5,624.5 196,630.5 182.5,630.5" fill="#dcd3ce" stroke="#0e1e33" stroke-width="3" stroke-linejoin="miter"/>
<text x="62.22" y="627.60" font-size="13.78" textLength="108.78" lengthAdjust="spacingAndGlyphs" fill="#141414">id_author[511:0]</text>
<polygon points="182.5,637.5 196,637.5 200.5,643.5 196,649.5 182.5,649.5" fill="#dcd3ce" stroke="#0e1e33" stroke-width="3" stroke-linejoin="miter"/>
<text x="57.45" y="646.60" font-size="13.78" textLength="113.55" lengthAdjust="spacingAndGlyphs" fill="#141414">id_version[255:0]</text>
<polygon points="182.5,655.5 196,655.5 200.5,661.5 196,667.5 182.5,667.5" fill="#dcd3ce" stroke="#0e1e33" stroke-width="3" stroke-linejoin="miter"/>
<text x="34.95" y="664.60" font-size="13.78" textLength="136.05" lengthAdjust="spacingAndGlyphs" fill="#141414">id_timestamp[255:0]</text>
<polygon points="182.5,673.5 196,673.5 200.5,679.5 196,685.5 182.5,685.5" fill="#dcd3ce" stroke="#0e1e33" stroke-width="3" stroke-linejoin="miter"/>
<text x="73.84" y="682.60" font-size="13.78" textLength="97.16" lengthAdjust="spacingAndGlyphs" fill="#141414">id_hash[511:0]</text>
</svg>
</body></html>
